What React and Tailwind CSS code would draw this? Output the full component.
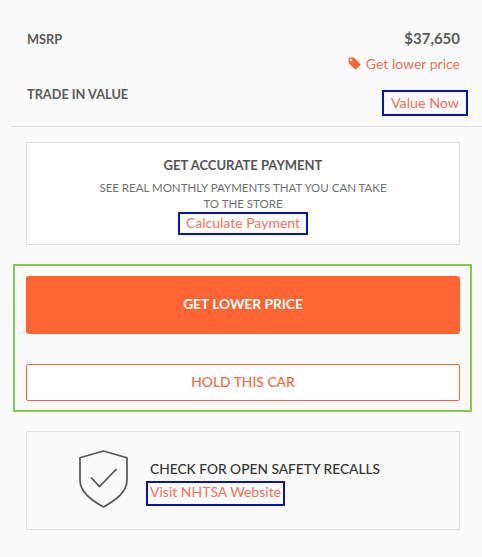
import React from "react";

function Tag() {
  return (
    <svg width="13" height="13" viewBox="0 0 13 13" className="mr-[5px] shrink-0">
      <path d="M0.6 1.8 C0.6 1.1 1.1 0.6 1.8 0.6 L5.3 0.6 C5.8 0.6 6.2 0.8 6.5 1.1 L12.1 6.7 C12.6 7.2 12.6 7.9 12.1 8.4 L8.4 12.1 C7.9 12.6 7.2 12.6 6.7 12.1 L1.1 6.5 C0.8 6.2 0.6 5.8 0.6 5.3 Z M3 4.4 A1.3 1.3 0 1 0 3 1.8 A1.3 1.3 0 1 0 3 4.4 Z" fill="#ff6633" fillRule="evenodd" />
    </svg>
  );
}

function Shield() {
  return (
    <svg width="49" height="58" viewBox="0 0 49 58" fill="none" stroke="#555555" strokeWidth="1.7" className="shrink-0 -mt-[3px]">
      <path d="M24.5 1 L48 7.8 V30 C48 42 37 50 24.5 57 C12 50 1 42 1 30 V7.8 Z" strokeLinejoin="round" />
      <path d="M12 27.5 L20.5 36.5 L37.5 19" />
    </svg>
  );
}

export default function App() {
  return (
    <div className="w-[482px] h-[557px] overflow-hidden bg-[#fafafa] font-['Lato','Liberation_Sans',sans-serif] pt-[29px]">
      <div className="pl-[27px] pr-[22px]">
        <div className="flex justify-between items-center h-[19px] text-[#5a5a5a] font-bold">
          <span className="text-[12.75px] mt-[3px]">MSRP</span>
          <span className="text-[15px]">$37,650</span>
        </div>
        <div className="flex justify-end items-center h-[20px] mt-[5px] text-[14px] text-[#f0745a]">
          <Tag />
          <span>Get lower price</span>
        </div>
        <div className="flex justify-between items-start mt-[17px]">
          <span className="text-[12.75px] font-bold text-[#5a5a5a] leading-[18px] mt-[-5px]">TRADE IN VALUE</span>
          <a className="-mr-2 w-[86px] h-[26px] flex items-center justify-center border-2 border-[#0a14b4] text-[14.25px] text-[#f0745a]">Value Now</a>
        </div>
      </div>
      <div className="ml-[11px] mt-[10px] border-t border-[#dcdcdc]" />

      <div className="ml-[26px] mr-[22px] mt-[15px] h-[103px] border border-[#e0e0e0] bg-white flex flex-col items-center pt-[13px]">
        <div className="text-[13px] font-bold text-[#555555] leading-[18px]">GET ACCURATE PAYMENT</div>
        <div className="text-[11.5px] text-[#707070] leading-[16px] mt-[6px] text-center w-[295px]">SEE REAL MONTHLY PAYMENTS THAT YOU CAN TAKE TO THE STORE</div>
        <a className="w-[130px] h-[23px] pb-[3px] flex items-center justify-center border-2 border-[#0a14b4] text-[14px] text-[#f0745a]">Calculate Payment</a>
      </div>

      <div className="ml-[13px] mr-[10px] mt-[19px] h-[148px] border-2 border-[#84cc50] pl-[11px] pr-[10px] pt-[10px]">
        <button className="w-full h-[58px] rounded-[3px] bg-[#ff6633] text-white text-[13.75px] font-bold block pb-[2px]">GET LOWER PRICE</button>
        <button className="w-full h-[37px] mt-[30px] rounded-[2px] border border-[#f2694a] bg-white text-[#f2694a] text-[13.85px] font-medium block">HOLD THIS CAR</button>
      </div>

      <div className="ml-[26px] mr-[22px] mt-[19px] h-[99px] border border-[#e0e0e0] bg-[#fafafa] flex items-center pl-[52px]">
        <Shield />
        <div className="ml-[22px] mt-[3px] flex flex-col items-start">
          <div className="text-[13.75px] font-medium text-[#333333] leading-[20px]">CHECK FOR OPEN SAFETY RECALLS</div>
          <a className="-ml-[4px] w-[139px] h-[25px] pb-[3px] mt-[2px] flex items-center justify-center border-2 border-[#0a14b4] text-[14px] text-[#f0745a]">Visit NHTSA Website</a>
        </div>
      </div>
    </div>
  );
}
